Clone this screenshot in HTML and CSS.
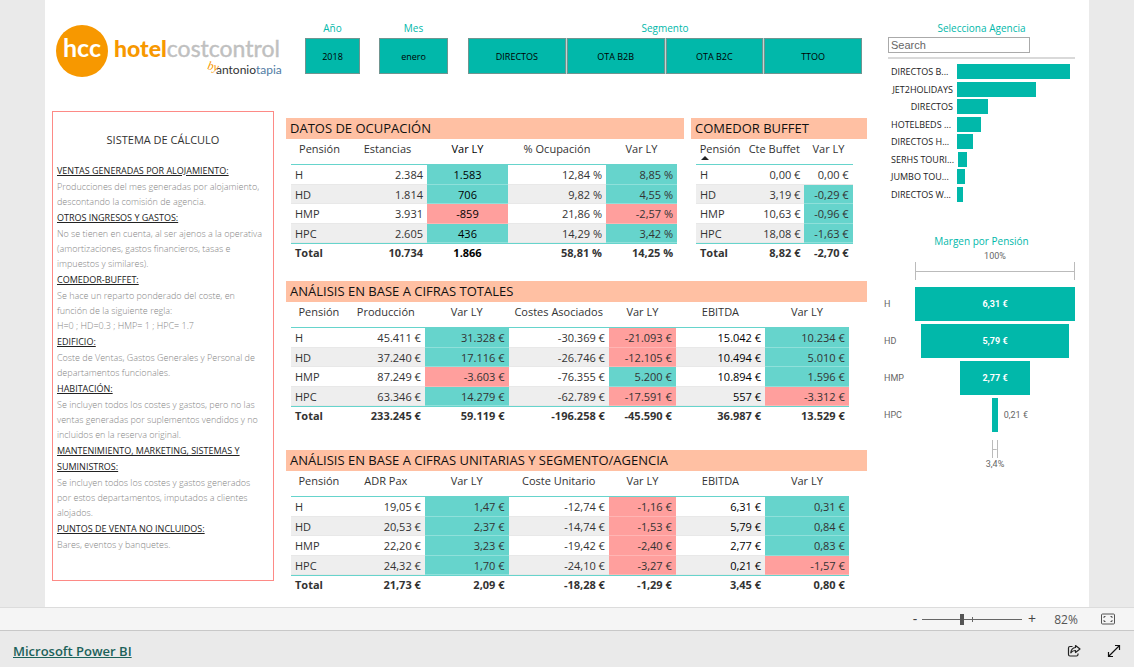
FILE: index.html
```html
<!DOCTYPE html>
<html lang="es">
<head>
<meta charset="utf-8">
<title>Hotel Cost Control</title>
<link rel="stylesheet" href="styles.css">
</head>
<body>
<main class="report">
  <div class="report-main">
    <header class="report-header">
      <svg class="logo" viewBox="0 0 230 56" role="img" aria-label="hotelcostcontrol by antoniotapia">
        <circle cx="26" cy="28" r="26" fill="#f79800"/>
        <text class="logo-mark" x="26" y="34" text-anchor="middle">hcc</text>
        <text class="logo-name" x="58" y="34"><tspan class="logo-hotel">hotel</tspan><tspan class="logo-cost">costcontrol</tspan></text>
        <text class="logo-by" x="151" y="46" transform="rotate(12 151 46)">by</text>
        <text class="logo-author" x="160" y="51">antonio<tspan fill="#4f7ba3">tapia</tspan></text>
      </svg>
      <section class="slicer slicer-year">
        <h2 class="slicer-title">Año</h2>
        <div class="slicer-items"><button class="slicer-btn" type="button">2018</button></div>
      </section>
      <section class="slicer slicer-month">
        <h2 class="slicer-title">Mes</h2>
        <div class="slicer-items"><button class="slicer-btn" type="button">enero</button></div>
      </section>
      <section class="slicer slicer-segment">
        <h2 class="slicer-title">Segmento</h2>
        <div class="slicer-items">
          <button class="slicer-btn" type="button">DIRECTOS</button>
          <button class="slicer-btn" type="button">OTA B2B</button>
          <button class="slicer-btn" type="button">OTA B2C</button>
          <button class="slicer-btn" type="button">TTOO</button>
        </div>
      </section>
    </header>

    <div class="report-body">
      <section class="notes">
        <h2 class="notes-title">SISTEMA DE CÁLCULO</h2>
        <dl class="notes-list">
          <dt>VENTAS GENERADAS POR ALOJAMIENTO:</dt>
          <dd>Producciones del mes generadas por alojamiento,<br>descontando la comisión de agencia.</dd>
          <dt>OTROS INGRESOS Y GASTOS:</dt>
          <dd>No se tienen en cuenta, al ser ajenos a la operativa<br>(amortizaciones, gastos financieros, tasas e<br>impuestos y similares).</dd>
          <dt>COMEDOR-BUFFET:</dt>
          <dd>Se hace un reparto ponderado del coste, en<br>función de la siguiente regla:<br>H=0 ; HD=0.3 ; HMP= 1 ; HPC= 1.7</dd>
          <dt>EDIFICIO:</dt>
          <dd>Coste de Ventas, Gastos Generales y Personal de<br>departamentos funcionales.</dd>
          <dt>HABITACIÓN:</dt>
          <dd>Se incluyen todos los costes y gastos, pero no las<br>ventas generadas por suplementos vendidos y no<br>incluidos en la reserva original.</dd>
          <dt>MANTENIMIENTO, MARKETING, SISTEMAS Y<br>SUMINISTROS:</dt>
          <dd>Se incluyen todos los costes y gastos generados<br>por estos departamentos, imputados a clientes<br>alojados.</dd>
          <dt>PUNTOS DE VENTA NO INCLUIDOS:</dt>
          <dd>Bares, eventos y banquetes.</dd>
        </dl>
      </section>

      <div class="tables">
        <div class="table-pair">
          <section class="block block-occupancy">
            <h2 class="block-title">DATOS DE OCUPACIÓN</h2>
            <table class="data occupancy">
              <colgroup><col class="c57"><col class="c79"><col class="c81"><col class="c98"><col class="c71"></colgroup>
              <thead><tr><th>Pensión</th><th>Estancias</th><th class="strong">Var LY</th><th>% Ocupación</th><th>Var LY</th></tr></thead>
              <tbody>
                <tr><td>H</td><td>2.384</td><td class="up mid">1.583</td><td>12,84 %</td><td class="up">8,85 %</td></tr>
                <tr><td>HD</td><td>1.814</td><td class="up mid">706</td><td>9,82 %</td><td class="up">4,55 %</td></tr>
                <tr><td>HMP</td><td>3.931</td><td class="down mid">-859</td><td>21,86 %</td><td class="down">-2,57 %</td></tr>
                <tr><td>HPC</td><td>2.605</td><td class="up mid">436</td><td>14,29 %</td><td class="up">3,42 %</td></tr>
              </tbody>
              <tfoot><tr><td>Total</td><td>10.734</td><td class="mid">1.866</td><td>58,81 %</td><td>14,25 %</td></tr></tfoot>
            </table>
          </section>
          <section class="block block-buffet">
            <h2 class="block-title">COMEDOR BUFFET</h2>
            <table class="data buffet">
              <colgroup><col class="c48"><col class="c60"><col class="c48"></colgroup>
              <thead><tr><th class="sorted">Pensión</th><th>Cte Buffet</th><th>Var LY</th></tr></thead>
              <tbody>
                <tr><td>H</td><td>0,00 €</td><td>0,00 €</td></tr>
                <tr><td>HD</td><td>3,19 €</td><td class="up">-0,29 €</td></tr>
                <tr><td>HMP</td><td>10,63 €</td><td class="up">-0,96 €</td></tr>
                <tr><td>HPC</td><td>18,08 €</td><td class="up">-1,63 €</td></tr>
              </tbody>
              <tfoot><tr><td>Total</td><td>8,82 €</td><td>-2,70 €</td></tr></tfoot>
            </table>
          </section>
        </div>

        <section class="block">
          <h2 class="block-title">ANÁLISIS EN BASE A CIFRAS TOTALES</h2>
          <table class="data wide">
            <colgroup><col class="w56"><col class="w80"><col class="w81"><col class="w100"><col class="w70"><col class="w88"><col class="w84"></colgroup>
            <thead><tr><th>Pensión</th><th>Producción</th><th>Var LY</th><th>Costes Asociados</th><th>Var LY</th><th>EBITDA</th><th>Var LY</th></tr></thead>
            <tbody>
              <tr><td>H</td><td>45.411 €</td><td class="up">31.328 €</td><td>-30.369 €</td><td class="down">-21.093 €</td><td class="strong">15.042 €</td><td class="up">10.234 €</td></tr>
              <tr><td>HD</td><td>37.240 €</td><td class="up">17.116 €</td><td>-26.746 €</td><td class="down">-12.105 €</td><td class="strong">10.494 €</td><td class="up">5.010 €</td></tr>
              <tr><td>HMP</td><td>87.249 €</td><td class="down">-3.603 €</td><td>-76.355 €</td><td class="up">5.200 €</td><td class="strong">10.894 €</td><td class="up">1.596 €</td></tr>
              <tr><td>HPC</td><td>63.346 €</td><td class="up">14.279 €</td><td>-62.789 €</td><td class="down">-17.591 €</td><td class="strong">557 €</td><td class="down">-3.312 €</td></tr>
            </tbody>
            <tfoot><tr><td>Total</td><td>233.245 €</td><td>59.119 €</td><td>-196.258 €</td><td>-45.590 €</td><td>36.987 €</td><td>13.529 €</td></tr></tfoot>
          </table>
        </section>

        <section class="block block-unit">
          <h2 class="block-title">ANÁLISIS EN BASE A CIFRAS UNITARIAS Y SEGMENTO/AGENCIA</h2>
          <table class="data wide">
            <colgroup><col class="w56"><col class="w80"><col class="w81"><col class="w100"><col class="w70"><col class="w88"><col class="w84"></colgroup>
            <thead><tr><th>Pensión</th><th>ADR Pax</th><th>Var LY</th><th>Coste Unitario</th><th>Var LY</th><th>EBITDA</th><th>Var LY</th></tr></thead>
            <tbody>
              <tr><td>H</td><td>19,05 €</td><td class="up">1,47 €</td><td>-12,74 €</td><td class="down">-1,16 €</td><td class="strong">6,31 €</td><td class="up">0,31 €</td></tr>
              <tr><td>HD</td><td>20,53 €</td><td class="up">2,37 €</td><td>-14,74 €</td><td class="down">-1,53 €</td><td class="strong">5,79 €</td><td class="up">0,84 €</td></tr>
              <tr><td>HMP</td><td>22,20 €</td><td class="up">3,23 €</td><td>-19,42 €</td><td class="down">-2,40 €</td><td class="strong">2,77 €</td><td class="up">0,83 €</td></tr>
              <tr><td>HPC</td><td>24,32 €</td><td class="up">1,70 €</td><td>-24,10 €</td><td class="down">-3,27 €</td><td class="strong">0,21 €</td><td class="down">-1,57 €</td></tr>
            </tbody>
            <tfoot><tr><td>Total</td><td>21,73 €</td><td>2,09 €</td><td>-18,28 €</td><td>-1,29 €</td><td>3,45 €</td><td>0,80 €</td></tr></tfoot>
          </table>
        </section>
      </div>
    </div>
  </div>

  <aside class="report-side">
    <section class="agency">
      <h2 class="slicer-title">Selecciona Agencia</h2>
      <div class="agency-search"><input class="search" type="text" placeholder="Search" aria-label="Search"></div>
      <ul class="agency-bars">
        <li><span class="name">DIRECTOS B...</span><span class="track"><span class="bar" style="width:100%"></span></span></li>
        <li><span class="name name-end">JET2HOLIDAYS</span><span class="track"><span class="bar" style="width:70%"></span></span></li>
        <li><span class="name name-end">DIRECTOS</span><span class="track"><span class="bar" style="width:27%"></span></span></li>
        <li><span class="name">HOTELBEDS ...</span><span class="track"><span class="bar" style="width:21%"></span></span></li>
        <li><span class="name">DIRECTOS H...</span><span class="track"><span class="bar" style="width:14%"></span></span></li>
        <li><span class="name">SERHS TOURI...</span><span class="track"><span class="bar" style="width:8%"></span></span></li>
        <li><span class="name">JUMBO TOU...</span><span class="track"><span class="bar" style="width:7%"></span></span></li>
        <li><span class="name">DIRECTOS W...</span><span class="track"><span class="bar" style="width:5%"></span></span></li>
      </ul>
    </section>
    <section class="funnel">
      <h2 class="slicer-title">Margen por Pensión</h2>
      <div class="funnel-edge">
        <span class="funnel-pct">100%</span>
        <span class="bracket"></span>
      </div>
      <ul class="funnel-bars">
        <li><span class="funnel-name">H</span><span class="funnel-track"><span class="funnel-bar" style="width:100%">6,31 €</span></span></li>
        <li><span class="funnel-name">HD</span><span class="funnel-track"><span class="funnel-bar" style="width:92%">5,79 €</span></span></li>
        <li><span class="funnel-name">HMP</span><span class="funnel-track"><span class="funnel-bar" style="width:44%">2,77 €</span></span></li>
        <li><span class="funnel-name">HPC</span><span class="funnel-track"><span class="funnel-bar" style="width:3.4%"><span class="outside">0,21 €</span></span></span></li>
      </ul>
      <div class="funnel-edge">
        <span class="bracket" style="width:3.4%"></span>
        <span class="funnel-pct">3,4%</span>
      </div>
    </section>
  </aside>
</main>

<div class="zoombar">
  <button class="zoom-step" type="button" aria-label="Alejar">-</button>
  <input class="zoom-range" type="range" min="0" max="100" value="40" aria-label="Zoom">
  <button class="zoom-step" type="button" aria-label="Acercar">+</button>
  <span class="zoom-value">82%</span>
  <button class="icon-btn" type="button" aria-label="Ajustar a la página">
    <svg width="16" height="12" viewBox="0 0 16 12" fill="none" stroke="#555"><rect x="1.500" y="1" width="13" height="10" rx="1"/><path d="M4 5V3.500H5.500M10.500 3.500H12V5M12 7V8.500H10.500M5.500 8.500H4V7"/></svg>
  </button>
</div>
<footer class="footer">
  <a class="brand" href="#">Microsoft Power BI</a>
  <button class="icon-btn" type="button" aria-label="Compartir">
    <svg width="14" height="14" viewBox="0 0 14 14" fill="none" stroke="#222" stroke-width="1.200"><path d="M5.500 2.500H3Q1.500 2.500 1.500 4V10.500Q1.500 12 3 12H9.500Q11 12 11 10.500V9.500"/><path d="M8.500 1.500L13 5L8.500 8.500V6.500Q5.500 6.300 3.800 8.800Q4.200 4 8.500 3.500Z" stroke-linejoin="round"/></svg>
  </button>
  <button class="icon-btn" type="button" aria-label="Pantalla completa">
    <svg width="14" height="14" viewBox="0 0 14 14" fill="none" stroke="#111" stroke-width="1.200"><path d="M1.500 12.500L12.500 1.500M8 1.500H12.500V6M1.500 8V12.500H6"/></svg>
  </button>
</footer>
</body>
</html>
```
FILE: styles.css
```css
* { box-sizing: border-box; }

body {
  margin: 0;
  min-height: 100vh;
  display: flex;
  flex-direction: column;
  background: #eaeaea;
  color: #333;
  font-family: "Open Sans", "Noto Sans", sans-serif;
  font-size: 11px;
}

h2, ul, dl, dd { margin: 0; padding: 0; }
h2 { font-weight: 400; }
ul { list-style: none; }
button { font-family: inherit; cursor: pointer; }

.report {
  flex: 1;
  display: flex;
  margin: 0 45px;
  padding: 21px 14px 8px 7px;
  gap: 17px;
  background: #fff;
}
.report-main { flex: 815 1 0; min-width: 0; }
.report-side { flex: 191 1 0; min-width: 0; }

/* Header */
.report-header { display: flex; align-items: flex-start; height: 90px; padding: 0 5px 0 4px; }
.logo { flex: 230 1 0; min-width: 0; margin-top: 2px; }
.logo text { font-family: Lato, "Open Sans", sans-serif; }
.logo .logo-mark { font-size: 25px; font-weight: 700; fill: #fff; }
.logo-name { font-size: 23px; }
.logo-hotel { font-weight: 900; fill: #f79800; }
.logo-cost { font-weight: 400; fill: #c0c0c0; stroke: #c0c0c0; stroke-width: 0.4; }
.logo .logo-by { font-family: "Liberation Serif", serif; font-size: 12px; font-style: italic; fill: #f79800; }
.logo-author { font-size: 12px; fill: #333; }

.slicer-title { color: #01b8aa; font-size: 10px; line-height: 14px; text-align: center; }
.slicer-year { flex: 55 1 0; margin-left: 19px; }
.slicer-month { flex: 69 1 0; margin-left: 19px; }
.slicer-segment { flex: 394 1 0; margin-left: 20px; }
.slicer-items { display: flex; gap: 1px; margin-top: 3px; background: #bfd5d2; }
.slicer-btn {
  flex: 1;
  height: 36px;
  padding: 0;
  border: 1px solid #6f9590;
  background: #01b8aa;
  color: #000;
  font-size: 9px;
}

/* Calculation notes */
.report-body { display: grid; grid-template-columns: 222fr 581fr; align-items: start; gap: 12px; }
.notes {
  min-width: 0;
  padding: 20px 4px 27px;
  border: 1px solid #fd8a86;
}
.notes-title { font-size: 11px; line-height: 16px; text-align: center; margin-bottom: 15px; }
.notes-list { font-size: 9px; white-space: nowrap; }
.notes-list dt { color: #222; line-height: 16px; text-decoration: underline; }
.notes-list dd { margin-bottom: 1px; color: #858585; font-weight: 300; line-height: 15px; }

/* Tables */
.tables { min-width: 0; padding-top: 7px; }
.table-pair { display: flex; gap: 7px; margin-bottom: 20px; }
.block-occupancy { flex: 398 1 0; }
.block-buffet { flex: 176 1 0; }
.block-unit { margin-top: 26px; }
.block-title {
  padding-left: 4px;
  background: #ffc0a3;
  color: #111;
  font-size: 13px;
  line-height: 21px;
  height: 21px;
  overflow: visible;
}
.data { margin-left: 5px; table-layout: fixed; border-collapse: separate; border-spacing: 0; line-height: 16px; }
.occupancy { width: 97%; }
.buffet { width: 89%; }
.wide { width: 96%; }
.c57 { width: 57px; } .c79 { width: 79px; } .c81 { width: 81px; } .c98 { width: 98px; } .c71 { width: 71px; }
.c48 { width: 48px; } .c60 { width: 60px; }
.w56 { width: 10%; } .w80 { width: 14%; } .w81 { width: 15%; } .w100 { width: 18%; }
.w70 { width: 12%; } .w88 { width: 16%; } .w84 { width: 15%; }
.data th, .data td { padding: 0 4px; text-align: right; white-space: nowrap; }
.data th {
  position: relative;
  height: 26px;
  padding: 2px 0 0;
  border-bottom: 1px solid #66d4cc;
  font-weight: 400;
  text-align: center;
  vertical-align: top;
}
.data td:first-child { text-align: left; }
.data tbody td { height: 20px; box-shadow: inset 0 -1px #e8e8e8; }
.data tbody tr:nth-child(even) td { height: 19px; background: #eee; }
.data tbody tr td.up { background: #66d4cc; box-shadow: inset 0 -1px #8fe0da; }
.data tbody tr td.down { background: #ff9f9d; box-shadow: inset 0 -1px #ffb5b3; }
.data tfoot td { height: 18px; border-top: 1px solid #66d4cc; font-weight: 700; }
.data td.mid { text-align: center; color: #000; }
.data .strong { color: #000; }
.sorted::after {
  content: "";
  position: absolute;
  left: 5px;
  bottom: 4px;
  border: 4px solid transparent;
  border-top: 0;
  border-bottom-color: #222;
}

/* Agency slicer */
.agency { padding-left: 4px; }
.agency-search { margin-top: 2px; padding-bottom: 4px; border-bottom: 2px solid #d9d9d9; display: flex; }
.search {
  width: 76%;
  height: 16px;
  padding: 0 2px;
  border: 1px solid #aaa;
  font: 11px "Liberation Sans", sans-serif;
}
.search::placeholder { color: #666; }
.agency-bars { display: grid; grid-auto-rows: 1fr; height: 140px; margin: 4px 5px 0 3px; font-size: 9px; color: #222; }
.agency-bars li { display: flex; align-items: center; gap: 4px; }
.name { flex: 0 0 62px; white-space: nowrap; }
.name-end { text-align: right; }
.track { flex: 1; }
.bar { display: block; height: 15px; background: #01b8aa; }

/* Funnel */
.funnel { margin-top: 31px; font-family: Roboto, sans-serif; font-size: 9px; color: #666; }
.funnel .slicer-title { font-family: "Open Sans", sans-serif; padding-left: 4px; }
.funnel-edge { display: flex; flex-direction: column; align-items: center; padding-left: 31px; }
.funnel-pct { line-height: 12px; }
.bracket {
  width: 100%;
  height: 18px;
  border: solid #bbb;
  border-width: 0 1px;
  background: linear-gradient(#bbb, #bbb) center / 100% 1px no-repeat;
}
.funnel-edge .funnel-pct:first-child { margin-top: 2px; }
.funnel-bars { display: flex; flex-direction: column; gap: 3px; margin: 7px 0 8px; }
.funnel-bars li { display: flex; align-items: center; }
.funnel-name { flex: 0 0 31px; }
.funnel-track { flex: 1; display: flex; justify-content: center; }
.funnel-bar {
  position: relative;
  height: 34px;
  line-height: 34px;
  background: #01b8aa;
  color: #fff;
  font-weight: 700;
  text-align: center;
}
.outside { position: absolute; left: 100%; padding-left: 6px; color: #666; font-weight: 400; white-space: nowrap; }

/* Zoom bar */
.zoombar {
  display: flex;
  align-items: center;
  justify-content: flex-end;
  height: 23px;
  padding-right: 18px;
  border-top: 1px solid #dcdcdc;
  background: #f5f5f5;
  color: #555;
}
.zoom-step { width: 8px; padding: 0; border: 0; background: none; color: #444; font-size: 14px; line-height: 16px; }
.zoom-range {
  appearance: none;
  width: 100px;
  height: 12px;
  margin: 0 6px 0 3px;
  background:
    linear-gradient(#666, #666) 50% 50% / 1px 5px no-repeat,
    linear-gradient(#666, #666) 50% 50% / 100% 1px no-repeat;
}
.zoom-range::-webkit-slider-thumb { appearance: none; width: 4px; height: 11px; background: #555; }
.zoom-value { width: 40px; margin-left: 10px; text-align: center; font-size: 12px; }
.icon-btn { display: flex; padding: 0; border: 0; background: none; }
.zoombar .icon-btn { margin-left: 14px; }

/* Footer */
.footer {
  display: flex;
  align-items: center;
  gap: 26px;
  height: 37px;
  padding: 3px 13px 0 13px;
  border-top: 1px solid #c8c8c8;
}
.brand { margin-right: auto; color: #1c625a; font-size: 13px; font-weight: 600; }
```
